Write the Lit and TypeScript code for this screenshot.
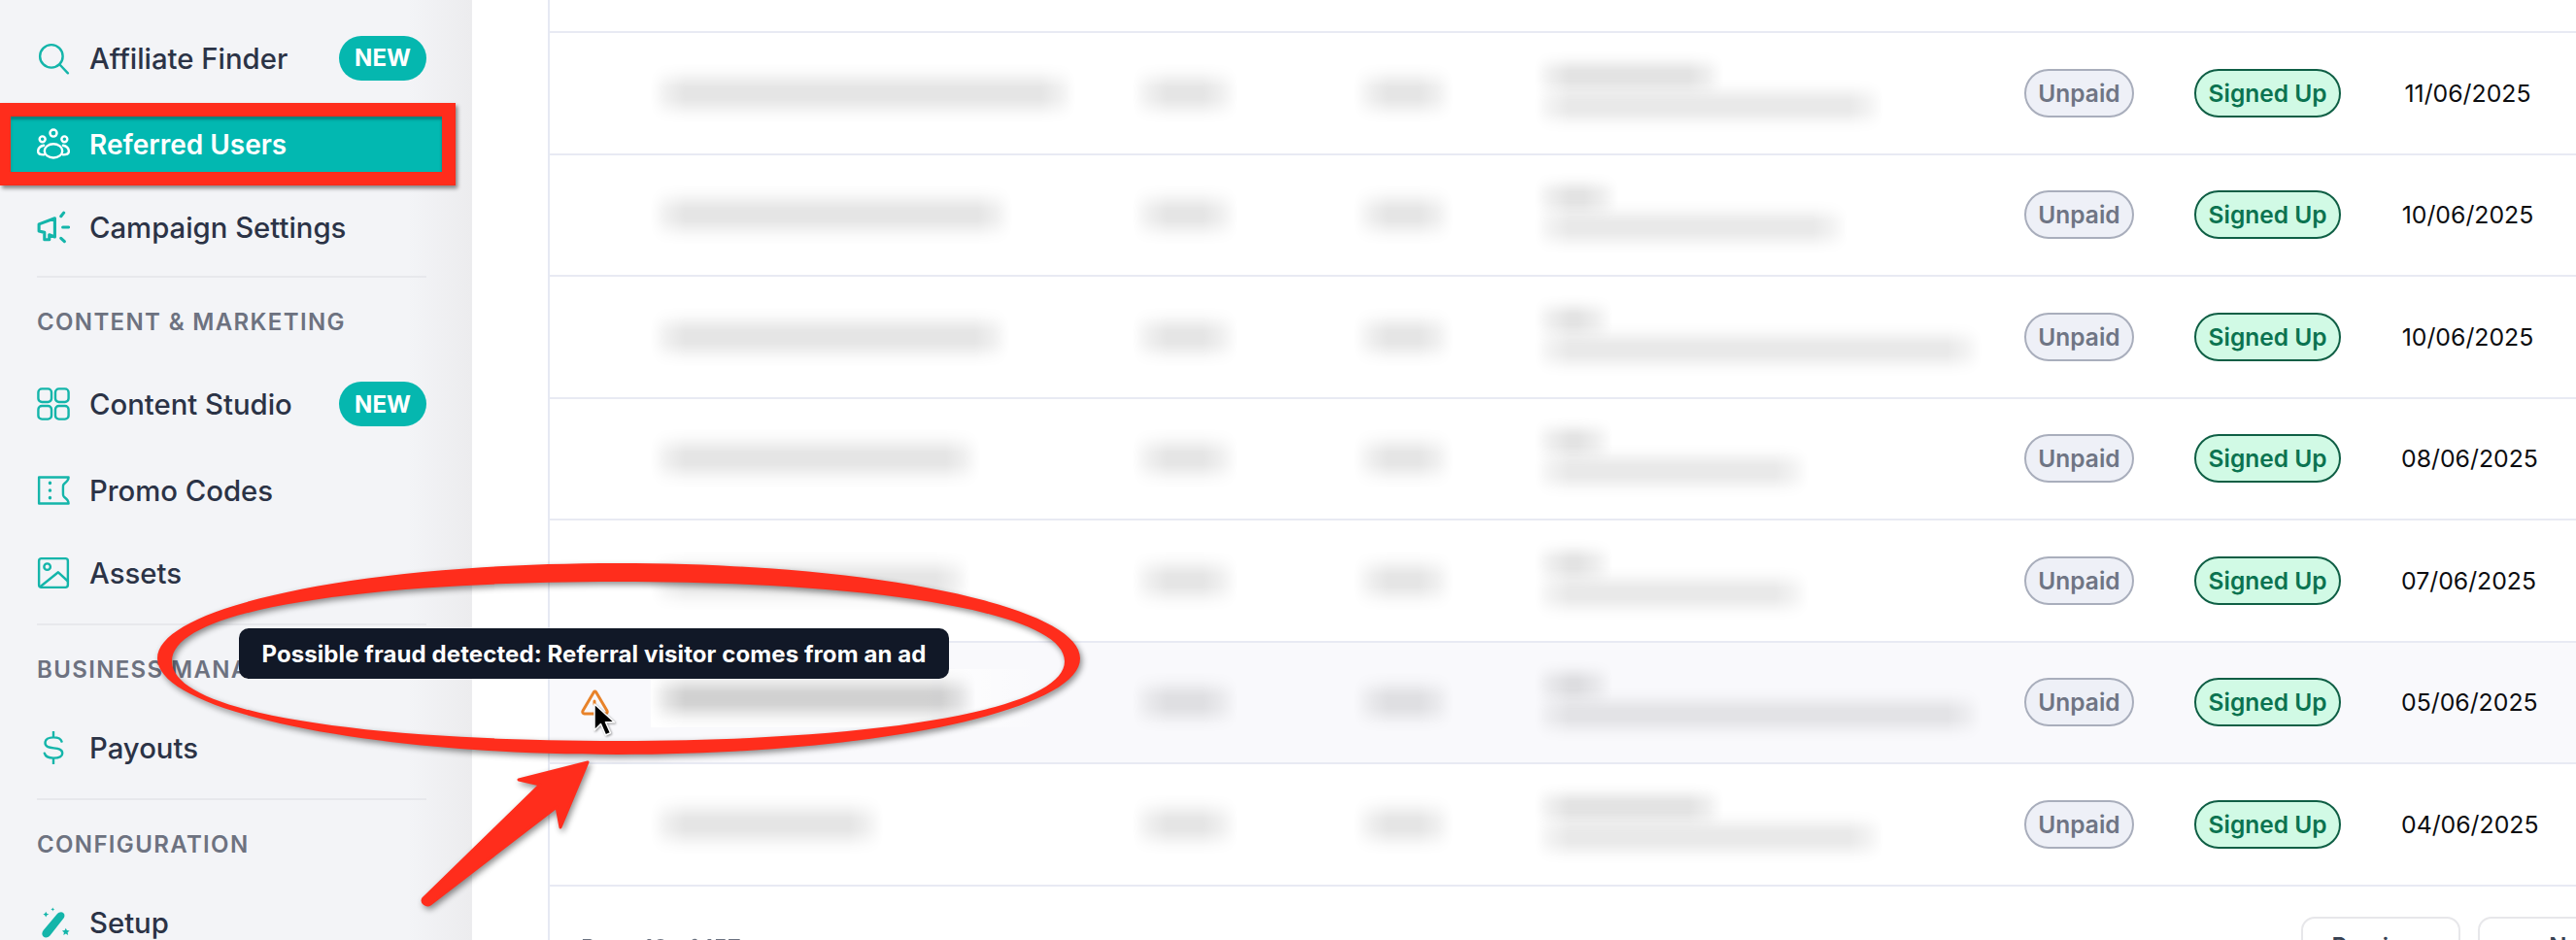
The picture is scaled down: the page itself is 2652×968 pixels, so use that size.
import { LitElement, html, css, svg } from "lit";
import { customElement } from "lit/decorators.js";

const ICONS: Record<string, any> = {
  search: svg`<circle cx="10.5" cy="10.5" r="8.3"/><path d="M16.6 16.6 22.5 22.8"/>`,
  users: svg`<circle cx="12" cy="3.600" r="2.500"/><circle cx="4" cy="8" r="2.100"/><circle cx="20" cy="8" r="2.100"/><ellipse cx="12" cy="16.500" rx="6.500" ry="5"/><path d="M5 12.500C2.500 13 .8 14.800 .8 16.800c0 1.500 1.500 2.500 4.200 2.500M19 12.500c2.500.5 4.200 2.300 4.200 4.300 0 1.500-1.500 2.500-4.200 2.500"/>`,
  mega: svg`<g stroke-width="2.200"><path d="M1.500 9.800 13 5.500v13.500L9 17.500v3.500H5.500v-5.200L1.500 14.800Z"/><path d="M17.500 4 19.500 1.500M18.800 12H23M17.500 20l2.500 2.300"/></g>`,
  grid: svg`<rect x="1" y="1" width="9.600" height="9.600" rx="2.600"/><rect x="13.400" y="1" width="9.600" height="9.600" rx="2.600"/><rect x="1" y="13.400" width="9.600" height="9.600" rx="2.600"/><rect x="13.400" y="13.400" width="9.600" height="9.600" rx="2.600"/>`,
  ticket: svg`<path d="M1.500 2.500H23c0 2-1 3-3 4.500-1 1-1 .500-1 5 0 4 0 4 1 5 2 1.500 3 2.500 3 4.500H1.500Z"/><path d="M9.500 6.500v.2M9.500 11.900v.2M9.500 17.300v.2" stroke-width="2.400"/>`,
  image: svg`<rect x="1.500" y="1.500" width="21" height="21" rx="1.800"/><circle cx="7.500" cy="7.500" r="2.300"/><path d="M3 21.500 15.500 11.500 22.500 18"/>`,
  dollar: svg`<path d="M12 .5v4M12 19.500v4M18 7.500C17.500 5.500 15 4.500 12 4.500 8.500 4.500 6 6 6 8.500c0 6 12.500 1.500 12.500 7.500 0 2.500-3 3.500-6.500 3.500-3 0-5.800-1-6.500-3.500"/>`,
};

const NAV = (icon: string, label: string, cls = "", badge = false) => html`
  <div class="item ${cls}">
    <svg class="ic" viewBox="0 0 24 24">${ICONS[icon]}</svg>
    <span class="lbl">${label}</span>
    ${badge ? html`<b class="new">NEW</b>` : ""}
  </div>`;

const ROWS = [
  { e: 403, n: 160, m: 325, d: "11/06/2025", t: 1 },
  { e: 338, n: 52, m: 288, d: "10/06/2025", t: 2 },
  { e: 335, n: 46, m: 426, d: "10/06/2025", t: 3 },
  { e: 305, n: 46, m: 248, d: "08/06/2025", t: 4 },
  { e: 295, n: 46, m: 248, d: "07/06/2025", t: 5 },
  { e: 300, n: 46, m: 426, d: "05/06/2025", t: 6 },
  { e: 205, n: 160, m: 325, d: "04/06/2025", t: 7 },
];

@customElement("app-root")
export class AppRoot extends LitElement {
  static styles = css`
    :host { display: block; width: 2652px; height: 968px; position: relative; overflow: hidden; background: #fff; font-family: Inter, "Liberation Sans", sans-serif; }
    .page { display: flex; height: 968px; }
    .side { width: 486px; flex: none; box-sizing: border-box; padding: 31px 31px 0 11px; background: linear-gradient(90deg, #f3f4f7 0 420px, #ececee 486px); display: flex; flex-direction: column; overflow: hidden; }
    .item { height: 57px; flex: none; box-sizing: border-box; padding: 0 16px 0 27px; display: flex; align-items: center; gap: 20px; font-size: 29.300px; font-weight: 500; color: #2b3346; white-space: nowrap; }
    .lbl { padding-top: 1px; }
    .item.active { background: #02b8b1; color: #fff; font-size: 28px; font-weight: 600; }
    .ic { width: 34px; height: 34px; flex: none; fill: none; stroke: #14b5aa; stroke-width: 1.700; stroke-linecap: round; stroke-linejoin: round; }
    .active .ic { stroke: #fff; }
    .new { margin-left: auto; width: 90px; height: 46px; border-radius: 23px; background: #05b7af; color: #fff; font-size: 24px; font-weight: 700; display: flex; align-items: center; justify-content: center; }
    .a1 { margin-bottom: 32px; } .a2 { margin-bottom: 28px; }
    .rule { height: 2px; flex: none; background: #e7e8ec; margin-left: 27px; margin-right: 16px; }
    .r1 { margin-top: 22px; } .r2 { margin-top: 23px; } .r3 { margin-top: 23px; }
    .head { height: 30px; line-height: 30px; flex: none; margin-left: 27px; font-size: 24px; font-weight: 600; letter-spacing: 1.350px; color: #6d7280; white-space: nowrap; }
    .h1 { margin-top: 31px; margin-bottom: 40.500px; } .h2 { margin-top: 31px; margin-bottom: 37px; } .h3 { margin-top: 31px; margin-bottom: 37px; }
    .c1 { margin-bottom: 32px; } .c2 { margin-bottom: 28px; }
    .main { flex: 1; padding: 0 0 0 78px; min-width: 0; }
    .table { border-left: 2px solid #e6e9f3; height: 968px; box-sizing: border-box; padding-top: 32px; display: flex; flex-direction: column; }
    .row { height: 125.500px; flex: none; box-sizing: border-box; border-top: 2px solid #e8eaf3; display: grid; grid-template-columns: 121px 496px 228px 186px 487px 175px 213px 1fr; align-items: center; }
    .row.hover { background: #f9f9fc; }
    .blur { height: 64px; margin-left: -18px; opacity: .1; background: linear-gradient(180deg, transparent, rgba(0,0,0,.2) 15%, rgba(0,0,0,.65) 30%, rgba(0,0,0,.95) 40%, #000 50%, rgba(0,0,0,.95) 60%, rgba(0,0,0,.65) 70%, rgba(0,0,0,.2) 85%, transparent); -webkit-mask-image: linear-gradient(90deg, transparent, rgba(0,0,0,.6) 18px, #000 36px, #000 calc(100% - 36px), rgba(0,0,0,.6) calc(100% - 18px), transparent); mask-image: linear-gradient(90deg, transparent, rgba(0,0,0,.6) 18px, #000 36px, #000 calc(100% - 36px), rgba(0,0,0,.6) calc(100% - 18px), transparent); }
    .stack { display: flex; flex-direction: column; margin-top: -2px; }
    .stack .blur { height: 52px; opacity: .11; }
    .stack .low { height: 58px; margin-top: -24px; opacity: .085; }
    .mask { width: 400px; height: 60px; background: linear-gradient(90deg, #fff 0 70%, rgba(255,255,255,0)); display: flex; align-items: center; margin-left: -17px; padding-left: 17px; box-sizing: border-box; margin-top: -8px; }
    .mask .blur { opacity: .18; flex: none; }
    .pill { box-sizing: border-box; height: 50px; display: inline-flex; align-items: center; justify-content: center; border-radius: 25px; border: 2px solid; font-size: 24.500px; font-weight: 600; }
    .unpaid { width: 113px; background: #eef0f7; border-color: #a9aebc; color: #6f7584; }
    .signed { width: 151px; background: #d1fae5; border-color: #0f5f45; color: #0b7350; }
    .date { font-size: 24.800px; color: #0c0d10; width: 137px; text-align: center; white-space: nowrap; }
    .foot { flex: 1; position: relative; display: flex; justify-content: flex-end; gap: 18px; padding-top: 31.500px; border-top: 2px solid #e8eaf3; }
    .count { position: absolute; left: 32px; top: 49px; font-size: 24px; font-weight: 500; color: #6b7280; filter: blur(.6px); white-space: nowrap; }
    .btn { box-sizing: border-box; height: 60px; width: 164px; border: 2px solid #e7e7ea; border-radius: 14px; font-size: 24px; font-weight: 600; color: #374151; display: flex; align-items: center; justify-content: center; }
    .btn.next { margin-right: -100px; width: 201px; }
    .tip { position: absolute; left: 246px; top: 647px; width: 731px; height: 52px; box-sizing: border-box; border-radius: 10px; background: #111827; color: #fff; font-size: 24px; font-weight: 700; display: flex; align-items: center; justify-content: center; white-space: nowrap; letter-spacing: .09px; }
    .marks { position: absolute; left: 0; top: 0; width: 2652px; height: 968px; pointer-events: none; }
    .red { fill: #ff2d1c; filter: drop-shadow(2px 3px 3px rgba(0,0,0,.45)); }
    .box { position: absolute; left: 0; top: 106px; width: 469px; height: 85px; box-sizing: border-box; border: solid #ff2d1c; border-width: 14px 14px 14px 11px; box-shadow: 2px 3px 4px rgba(0,0,0,.45), inset 0 3px 3px rgba(0,0,0,.3); }
    .warn { fill: none; stroke: #e8832a; stroke-width: 3; stroke-linejoin: round; stroke-linecap: round; }
    .cursor { fill: #000; stroke: #fff; stroke-width: 1.500; stroke-linejoin: round; filter: drop-shadow(1px 1px 1px rgba(0,0,0,.4)); }
    .wand { width: 34px; height: 34px; flex: none; }
  `;

  render() {
    const w = (n: number) => `width:${n + 36}px`;
    return html`
      <div class="page">
        <aside class="side">
          ${NAV("search", "Affiliate Finder", "a1", true)}
          ${NAV("users", "Referred Users", "active a2")}
          ${NAV("mega", "Campaign Settings")}
          <div class="rule r1"></div>
          <div class="head h1">CONTENT &amp; MARKETING</div>
          ${NAV("grid", "Content Studio", "c1", true)}
          ${NAV("ticket", "Promo Codes", "c2")}
          ${NAV("image", "Assets")}
          <div class="rule r2"></div>
          <div class="head h2">BUSINESS MANAGEMENT</div>
          ${NAV("dollar", "Payouts")}
          <div class="rule r3"></div>
          <div class="head h3">CONFIGURATION</div>
          <div class="item">
            <svg class="wand" viewBox="0 0 24 24" fill="#14b5aa">
              <path d="M14.500 6c1.400-1.600 3.600-2 4.800-.9s1 3-.4 4.500L9.500 21.500c-1.300 1.500-3.500 1.800-4.800.7s-1.200-3.200 0-4.600Z"/>
              <path d="M6.500 4l.7 1.500L8.700 6l-1.500.7L6.500 8.200l-.7-1.500L4.500 6l1.300-.5ZM21 16l.8 1.700 1.900.3-1.400 1.300.4 1.900-1.700-1-1.700 1 .4-1.900-1.400-1.300 1.900-.3ZM11.500 1l.4 1 1 .4-1 .4-.4 1-.4-1-1-.4 1-.4Z"/>
            </svg>
            <span class="lbl">Setup</span>
          </div>
        </aside>
        <main class="main">
          <div class="table">
            ${ROWS.map((r) => html`
              <div class="row ${r.t === 6 ? "hover" : ""}">
                <div></div>
                <div class="${r.t === 6 ? "mask" : ""}"><div class="blur" style=${w(r.e)}></div></div>
                <div><div class="blur" style=${w(74)}></div></div>
                <div><div class="blur" style=${w(68)}></div></div>
                <div class="stack">
                  <div class="blur" style=${w(r.n)}></div>
                  <div class="blur low" style=${w(r.m)}></div>
                </div>
                <div><span class="pill unpaid">Unpaid</span></div>
                <div><span class="pill signed">Signed Up</span></div>
                <div class="date">${r.d}</div>
              </div>`)}
            <div class="foot">
              <div class="count">Page 10 of 157</div>
              <div class="btn">Previous</div>
              <div class="btn next">Next</div>
            </div>
          </div>
        </main>
      </div>
      <div class="box"></div>
      <div class="tip">Possible fraud detected: Referral visitor comes from an ad</div>
      <svg class="marks" viewBox="0 0 2652 968">
        <path class="warn" d="M611.500 712.500 600 732a2 2 0 0 0 1.700 3h21.600a2 2 0 0 0 1.700-3L613.500 712.500a1.200 1.200 0 0 0-2 0Z"/>
        <path d="M612 722v3" class="warn" stroke-width="2"/>
        <path class="cursor" d="M612 725V752l6.500-6.500L623.500 757l5-2.300-5-11h9Z"/>
        <path class="red" fill-rule="evenodd" d="M162 678C162 624 374 580 636 580S1112 624 1112 678 898 777 636 777 162 732 162 678ZM177 681C177 736 383 763 637 763S1096 733 1096 681 891 599 637 599 177 626 177 681Z"/>
        <path class="red" stroke="#ff2d1c" stroke-width="3" stroke-linejoin="round" d="M605 785 534 803 556 808 436 925C433 929 439 934 443 931L573 831 577 852Z"/>
      </svg>
    `;
  }
}
